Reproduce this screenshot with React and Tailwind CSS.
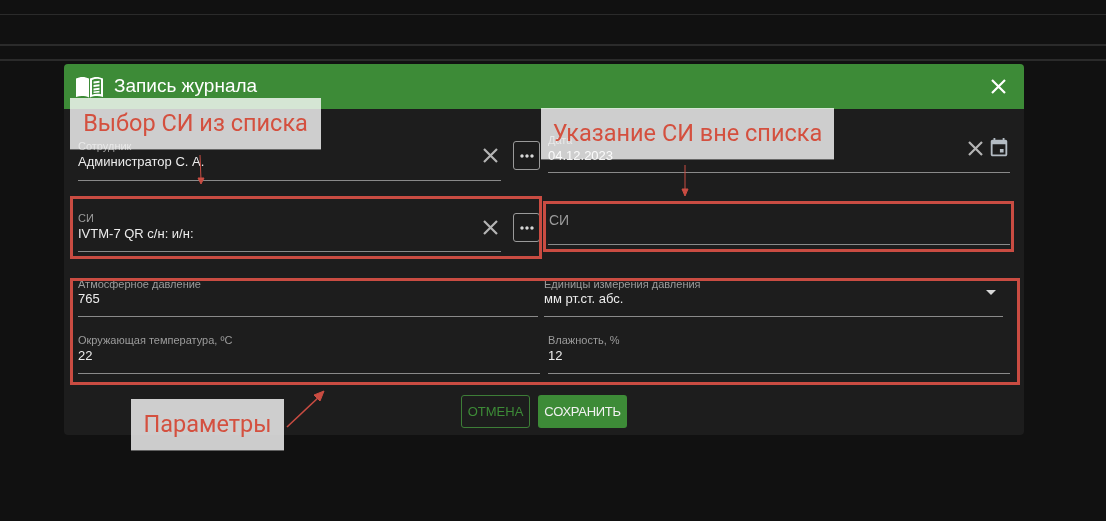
import React from "react";
import { MdMoreHoriz, MdArrowDropDown } from "react-icons/md";

const Field = ({ label, value, className, labelClass = "text-[11px] leading-[14px]", valueClass = "mt-[1px]" }) => (
  <div className={`border-b border-[#8a8a8a] ${className}`}>
    <div className={`text-[#9c9c9c] ${labelClass}`}>{label}</div>
    {value && <div className={`text-[13px] leading-[15px] text-[#ececec] ${valueClass}`}>{value}</div>}
  </div>
);

const CloseIcon = ({ className }) => (
  <svg width="23" height="23" viewBox="0 0 23 23" fill="none" stroke="currentColor" strokeWidth="2.2" className={className}>
    <path d="M5 5L18 18M18 5L5 18" />
  </svg>
);

const ClearIcon = ({ className }) => <CloseIcon className={`absolute text-[#b4b4b4] ${className}`} />;

const DotsButton = ({ className }) => (
  <button className={`flex h-[29px] w-[27px] shrink-0 items-center justify-center rounded-[3px] border border-[#9a9a9a] text-[#d8d8d8] ${className}`}>
    <MdMoreHoriz size={20} />
  </button>
);

const BookIcon = () => (
  <svg width="27" height="22" viewBox="0 0 27 22" fill="white" className="shrink-0">
    <path d="M0 2.5C4 .4 9 .4 13 2.5V21.500C9 19.600 4 19.600 0 21Z" />
    <path
      fillRule="evenodd"
      d="M14 2.500C18 .4 23 .4 27 2.500V21C23 19.600 18 19.600 14 21.500ZM16 4V18.800C19 17.600 22.500 17.600 25 18.300V3.500C22.500 2.500 19 2.700 16 4Z"
    />
    <path d="M17.500 5.500L23.500 4.800V6.800L17.500 7.500ZM17.500 9L23.500 8.300V10.300L17.500 11ZM17.500 12.500L23.500 11.800V13.800L17.500 14.500ZM17.500 15.500L23.500 14.800V16.500L17.500 17Z" />
  </svg>
);

const CalendarIcon = ({ className }) => (
  <svg width="22" height="22" viewBox="0 0 24 24" fill="currentColor" className={className}>
    <path
      fillRule="evenodd"
      d="M19 3h-1V1h-2v2H8V1H6v2H5C3.900 3 3 3.900 3 5v14c0 1.100.9 2 2 2h14c1.100 0 2-.9 2-2V5c0-1.100-.9-2-2-2zm0 16H5V8h14v11z"
    />
    <path d="M13 13h4v4h-4z" />
  </svg>
);

// the grey plate is screen-blended, so the form text under it still shows through
const Note = ({ children, className }) => (
  <>
    <div className={`absolute border-b border-[#555] bg-[#c8c8c8] mix-blend-screen ${className}`} />
    <div className={`absolute flex items-center justify-center whitespace-nowrap font-['Roboto',sans-serif] text-[23.5px] text-[#d4503f] ${className}`}>
      {children}
    </div>
  </>
);

const Frame = ({ className }) => <div className={`absolute border-[3px] border-[#c94c42] ${className}`} />;

export default function App() {
  return (
    <div className="relative h-[521px] w-[1106px] overflow-hidden bg-[#111111] font-['Liberation_Sans',sans-serif]">
      {/* page behind the dialog */}
      <div className="h-[15px] border-b border-[#2b2b2b]" />
      <div className="h-[31px] border-b-2 border-[#2b2b2b]" />
      <div className="h-[15px] border-b-2 border-[#2b2b2b]" />

      {/* dialog */}
      <div className="ml-[64px] mt-[3px] h-[371px] w-[960px] overflow-hidden rounded-[4px] bg-[#1d1d1d]">
        <div className="flex h-[45px] items-center bg-[#3d8b37] pl-[12px] pr-[14px] text-white">
          <BookIcon />
          <span className="ml-[11px] text-[19px]">Запись журнала</span>
          <CloseIcon className="ml-auto" />
        </div>

        {/* сотрудник / дата */}
        <div className="flex h-[85px] items-start pl-[14px] pt-[24px]">
          <div className="relative mt-[6px] w-[423px]">
            <Field label="Сотрудник" value="Администратор С. А." className="h-[42px]" />
            <ClearIcon className="right-[-1px] top-[5px]" />
          </div>
          <DotsButton className="ml-[12px] mt-[8px]" />
          <div className="relative ml-[8px] w-[462px]">
            <Field label="Дата" value="04.12.2023" className="h-[40px]" />
            <ClearIcon className="right-[23px] top-[4px]" />
            <CalendarIcon className="absolute right-0 top-[4px] text-[#b4bcc4]" />
          </div>
        </div>

        {/* си */}
        <div className="flex h-[83px] items-start pl-[14px]">
          <div className="relative mt-[17px] w-[423px]">
            <Field label="СИ" value="IVTM-7 QR с/н: и/н:" className="h-[41px]" />
            <ClearIcon className="right-[-1px] top-[5px]" />
          </div>
          <DotsButton className="ml-[12px] mt-[19px]" />
          <Field
            label="СИ"
            className="ml-[8px] mt-[18px] h-[33px] w-[462px] pl-[1px] pt-[1px]"
            labelClass="text-[14px] leading-[15px]"
          />
        </div>

        {/* параметры */}
        <div className="flex h-[56px] items-start pl-[14px]">
          <Field label="Атмосферное давление" value="765" className="h-[40px] w-[460px]" valueClass="mt-0" />
          <div className="relative ml-[6px] w-[459px]">
            <Field label="Единицы измерения давления" value="мм рт.ст. абс." className="h-[40px]" valueClass="mt-0" />
            <MdArrowDropDown size={24} className="absolute right-0 top-[3px] text-[#d8d8d8]" />
          </div>
        </div>
        <div className="flex h-[62px] items-start pl-[14px]">
          <Field label="Окружающая температура, ºС" value="22" className="h-[41px] w-[462px]" />
          <Field label="Влажность, %" value="12" className="ml-[8px] h-[41px] w-[462px]" />
        </div>

        <div className="flex justify-center gap-[8px] text-[13px]">
          <button className="h-[33px] w-[69px] rounded-[3px] border border-[#3d7d37] text-[#3d8b37]">ОТМЕНА</button>
          <button className="h-[33px] w-[89px] rounded-[3px] bg-[#3d8b37] tracking-[-0.3px] text-[#f1f1f1]">СОХРАНИТЬ</button>
        </div>
      </div>

      {/* пометки поверх скриншота */}
      <Frame className="left-[70px] top-[196px] h-[63px] w-[472px]" />
      <Frame className="left-[543px] top-[201px] h-[51px] w-[471px]" />
      <Frame className="left-[70px] top-[278px] h-[107px] w-[950px]" />

      <Note className="left-[70px] top-[98px] h-[52px] w-[251px]">Выбор СИ из списка</Note>
      <Note className="left-[541px] top-[108px] h-[52px] w-[293px]">Указание СИ вне списка</Note>
      <Note className="left-[131px] top-[399px] h-[52px] w-[153px]">Параметры</Note>

      <svg className="absolute left-0 top-0" width="1106" height="521" fill="none" stroke="#c94c42" strokeWidth="1">
        <path d="M200 155L201 180" />
        <path d="M201 184l-3-6h6z" fill="#c94c42" />
        <path d="M685 165V190" />
        <path d="M685 196l-3-7h6z" fill="#c94c42" />
        <path d="M287 427L320 396" strokeWidth="1.6" />
        <path d="M324 391l-10 4 6 6z" fill="#c94c42" />
      </svg>
    </div>
  );
}
